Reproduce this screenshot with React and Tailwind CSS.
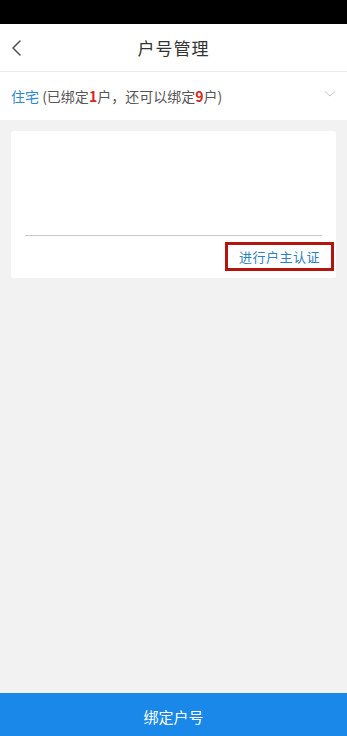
export default function App() {
  return (
    <div
      className="h-[736px] w-full flex flex-col bg-[#f2f2f2] overflow-hidden"
      style={{ fontFamily: '"Noto Sans CJK SC", "Noto Sans", sans-serif' }}
    >
      {/* status bar */}
      <div className="h-[24px] bg-black shrink-0" />

      {/* header */}
      <div className="h-[48px] bg-white shrink-0 relative flex items-center justify-center border-b border-[#ececec]">
        <svg className="absolute left-[10px] top-[14px]" width="14" height="20" viewBox="0 0 14 20" fill="none">
          <path d="M10 3 L3 10 L10 17" stroke="#555" strokeWidth="1.6" strokeLinecap="round" strokeLinejoin="round" />
        </svg>
        <span className="text-[17px] text-[#333] tracking-[1px]">户号管理</span>
      </div>

      {/* type row */}
      <div className="h-[48px] bg-white shrink-0 flex items-center justify-between pl-[11px] pr-[11px]">
        <div className="text-[14px] text-[#555]">
          <span className="text-[#2d8ad1]">住宅</span> (已绑定<span className="text-[#d8271c] font-bold">1</span>户，还可以绑定<span className="text-[#d8271c] font-bold">9</span>户)
        </div>
        <svg width="12" height="8" viewBox="0 0 12 8" fill="none" className="mb-[4px]">
          <path d="M1 1.5 L6 6 L11 1.5" stroke="#c4c4c4" strokeWidth="1" strokeLinecap="round" strokeLinejoin="round" />
        </svg>
      </div>

      {/* card */}
      <div className="mt-[11px] mx-[11px] bg-white rounded-[3px] h-[147px] flex flex-col">
        <div className="h-[104px]" />
        <div className="mx-[14px] h-px bg-[#c8c8c8]" />
        <div className="flex justify-end pr-[2px] mt-[6px]">
          <div className="border-[3px] border-[#b3140c] h-[29px] w-[109px] flex items-center justify-center">
            <span className="text-[13px] text-[#2d7fc0] tracking-[0.5px]">进行户主认证</span>
          </div>
        </div>
      </div>

      <div className="flex-1" />

      {/* bottom button */}
      <div className="h-[43px] bg-[#1a88e8] shrink-0 flex items-center justify-center pt-[6px]">
        <span className="text-[15px] text-white">绑定户号</span>
      </div>
    </div>
  );
}
